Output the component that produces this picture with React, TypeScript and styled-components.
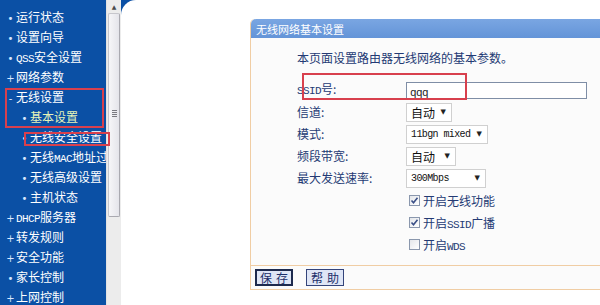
import React from "react";
import styled, { createGlobalStyle } from "styled-components";

const Global = createGlobalStyle`
  html, body { margin: 0; padding: 0; background: #ffffff; }
  body { width: 600px; height: 305px; overflow: hidden; font-family: "Noto Sans CJK SC", sans-serif; }
`;

const Page = styled.div`
  position: relative;
  display: flex;
  width: 600px;
  height: 305px;
  overflow: hidden;
`;

const Sidebar = styled.nav`
  width: 106px;
  flex: none;
  background: #0b50a5;
  display: flex;
  flex-direction: column;
  padding-top: 7px;
  box-sizing: border-box;
  overflow: hidden;
`;

const MenuItem = styled.div<{ $level: number; $active?: boolean }>`
  height: 20px;
  line-height: 20px;
  padding-left: ${(p) => (p.$level === 1 ? 5 : 19)}px;
  color: ${(p) => (p.$active ? "#e6f3b8" : "#ffffff")};
  font-size: 12px;
  white-space: nowrap;
`;

const Bullet = styled.span`
  display: inline-block;
  width: 11px;
  font-size: 10px;
  font-family: "DejaVu Sans", sans-serif;
  color: #d8e6ff;
  text-align: center;
`;

const Lat = styled.span<{ $size?: number }>`
  font-family: "Liberation Mono", monospace;
  font-size: ${(p) => p.$size ?? 11}px;
  letter-spacing: -0.6px;
`;

const Scroll = styled.div`
  width: 15px;
  flex: none;
  background: #ececec;
  display: flex;
  flex-direction: column;
  align-items: center;
  border-left: 1px solid #e2e2e2;
  box-sizing: border-box;
`;

const ScrollArrow = styled.div`
  height: 13px;
  width: 100%;
  display: flex;
  align-items: center;
  justify-content: center;
  font-size: 6px;
  color: #4a4a4a;
  font-family: "DejaVu Sans", sans-serif;
`;

const Thumb = styled.div`
  width: 12px;
  height: 204px;
  box-sizing: border-box;
  border: 1px solid #c6c6cc;
  border-right-color: #a9a9b0;
  border-bottom-color: #a9a9b0;
  border-radius: 2px;
  background: linear-gradient(to right, #f6f6f8, #e4e4ea);
  display: flex;
  align-items: center;
  justify-content: center;
  padding-bottom: 4px;
`;

const Grip = styled.div`
  width: 5px;
  display: flex;
  flex-direction: column;
  gap: 1px;
  & > i {
    display: block;
    height: 1px;
    background: #7a7a80;
  }
`;

const Main = styled.div`
  flex: 1;
  background: #0b50a5;
  position: relative;
  overflow: hidden;
`;

const Canvas = styled.div`
  height: 100%;
  background: #ffffff;
  border-top-left-radius: 15px;
  padding: 19px 0 0 129px;
  box-sizing: border-box;
`;

const Panel = styled.section`
  width: 380px;
  border: 1px solid #f0cda4;
  border-top: none;
  border-radius: 5px 0 0 0;
  background: #fbfbfb;
  display: flex;
  flex-direction: column;
`;

const PanelHead = styled.header`
  height: 19px;
  background: linear-gradient(#7aa6e2, #6394d8);
  border-radius: 5px 0 0 0;
  color: #ffffff;
  font-size: 11px;
  display: flex;
  align-items: center;
  padding-left: 5px;
`;

const PanelBody = styled.div`
  height: 227px;
  padding: 12px 0 0 46px;
  box-sizing: border-box;
  color: #243a74;
  font-size: 12px;
`;

const Desc = styled.div`
  height: 16px;
  line-height: 16px;
  margin-bottom: 13px;
`;

const Form = styled.div`
  display: grid;
  grid-template-columns: 109px 1fr;
  grid-auto-rows: 22px;
  align-items: center;
`;

const Label = styled.div`
  font-size: 12px;
  line-height: 16px;
  white-space: nowrap;
`;

const TextInput = styled.div`
  width: 181px;
  height: 17px;
  line-height: 15px;
  box-sizing: border-box;
  border: 1px solid #7f8ea6;
  background: #fff;
  padding-left: 3px;
  color: #222;
`;

const Select = styled.div<{ $w: number }>`
  width: ${(p) => p.$w}px;
  height: 19px;
  box-sizing: border-box;
  border: 1px solid #d0d0d0;
  background: #fff;
  display: flex;
  align-items: center;
  justify-content: space-between;
  padding: 0 5px 0 4px;
  color: #111;
  font-size: 12px;
  white-space: nowrap;
`;

const Caret = styled.span`
  font-size: 7px;
  color: #222;
  font-family: "DejaVu Sans", sans-serif;
`;

const Check = styled.label`
  grid-column: 2;
  display: flex;
  align-items: center;
  gap: 3px;
  padding-left: 3px;
  color: #243a74;
  font-size: 12px;
  white-space: nowrap;
`;

const Box = styled.span`
  width: 11px;
  height: 11px;
  flex: none;
  box-sizing: border-box;
  border: 1px solid #8a97ad;
  background: linear-gradient(135deg, #e4e6ea, #ffffff);
  display: flex;
  align-items: center;
  justify-content: center;
`;

const Footer = styled.footer`
  height: 23px;
  border-top: 1px solid #f0cda4;
  display: flex;
  align-items: center;
  gap: 13px;
  padding-left: 4px;
  background: #fbfbfb;
`;

const Btn = styled.button<{ $focus?: boolean }>`
  width: 38px;
  height: 17px;
  padding: 0;
  box-sizing: border-box;
  border: ${(p) => (p.$focus ? "2px solid #1d2a4e" : "1px solid #34447a")};
  background: #dfe6f6;
  color: #1c2f6a;
  font-family: "Noto Sans CJK SC", sans-serif;
  font-size: 12px;
  line-height: 1;
  white-space: nowrap;
  display: flex;
  align-items: center;
  justify-content: center;
  gap: 4px;
`;

const RedBox = styled.div`
  position: absolute;
  border: 2px solid #d8404d;
  box-sizing: border-box;
  pointer-events: none;
`;

const menu: { t: React.ReactNode; level: number; b: string; active?: boolean }[] = [
  { t: "运行状态", level: 1, b: "•" },
  { t: "设置向导", level: 1, b: "•" },
  { t: <><Lat>QSS</Lat>安全设置</>, level: 1, b: "•" },
  { t: "网络参数", level: 1, b: "+" },
  { t: "无线设置", level: 1, b: "-" },
  { t: "基本设置", level: 2, b: "•", active: true },
  { t: "无线安全设置", level: 2, b: "•" },
  { t: <>无线<Lat>MAC</Lat>地址过滤</>, level: 2, b: "•" },
  { t: "无线高级设置", level: 2, b: "•" },
  { t: "主机状态", level: 2, b: "•" },
  { t: <><Lat>DHCP</Lat>服务器</>, level: 1, b: "+" },
  { t: "转发规则", level: 1, b: "+" },
  { t: "安全功能", level: 1, b: "+" },
  { t: "家长控制", level: 1, b: "•" },
  { t: "上网控制", level: 1, b: "+" },
];

const Tick = () => (
  <svg width="9" height="9" viewBox="0 0 9 9">
    <path d="M1.5 4.5 L3.5 6.8 L7.5 1.8" fill="none" stroke="#3a4f86" strokeWidth="1.6" />
  </svg>
);

export default function App() {
  return (
    <Page>
      <Global />
      <Sidebar>
        {menu.map((m, i) => (
          <MenuItem key={i} $level={m.level} $active={m.active}>
            <Bullet>{m.b}</Bullet>
            {m.t}
          </MenuItem>
        ))}
      </Sidebar>
      <Scroll>
        <ScrollArrow>▲</ScrollArrow>
        <Thumb>
          <Grip>
            <i />
            <i />
            <i />
            <i />
          </Grip>
        </Thumb>
      </Scroll>
      <Main>
        <Canvas>
          <Panel>
            <PanelHead>无线网络基本设置</PanelHead>
            <PanelBody>
              <Desc>本页面设置路由器无线网络的基本参数。</Desc>
              <Form>
                <Label>
                  <Lat>SSID</Lat>号:
                </Label>
                <TextInput>
                  <Lat>qqq</Lat>
                </TextInput>
                <Label>信道:</Label>
                <Select $w={46}>
                  自动<Caret>▼</Caret>
                </Select>
                <Label>模式:</Label>
                <Select $w={82}>
                  <Lat $size={10}>11bgn mixed</Lat>
                  <Caret>▼</Caret>
                </Select>
                <Label>频段带宽:</Label>
                <Select $w={50}>
                  自动<Caret>▼</Caret>
                </Select>
                <Label>最大发送速率:</Label>
                <Select $w={80}>
                  <Lat $size={10}>300Mbps</Lat>
                  <Caret>▼</Caret>
                </Select>
                <Check>
                  <Box>
                    <Tick />
                  </Box>
                  <span>开启无线功能</span>
                </Check>
                <Check>
                  <Box>
                    <Tick />
                  </Box>
                  <span>
                    开启<Lat>SSID</Lat>广播
                  </span>
                </Check>
                <Check>
                  <Box />
                  <span>
                    开启<Lat>WDS</Lat>
                  </span>
                </Check>
              </Form>
            </PanelBody>
            <Footer>
              <Btn $focus>
                <span>保</span>
                <span>存</span>
              </Btn>
              <Btn>
                <span>帮</span>
                <span>助</span>
              </Btn>
            </Footer>
          </Panel>
        </Canvas>
      </Main>
      <RedBox style={{ left: 5, top: 88, width: 99, height: 40 }} />
      <RedBox style={{ left: 24, top: 132, width: 86, height: 14 }} />
      <RedBox style={{ left: 302, top: 73, width: 165, height: 27 }} />
    </Page>
  );
}
